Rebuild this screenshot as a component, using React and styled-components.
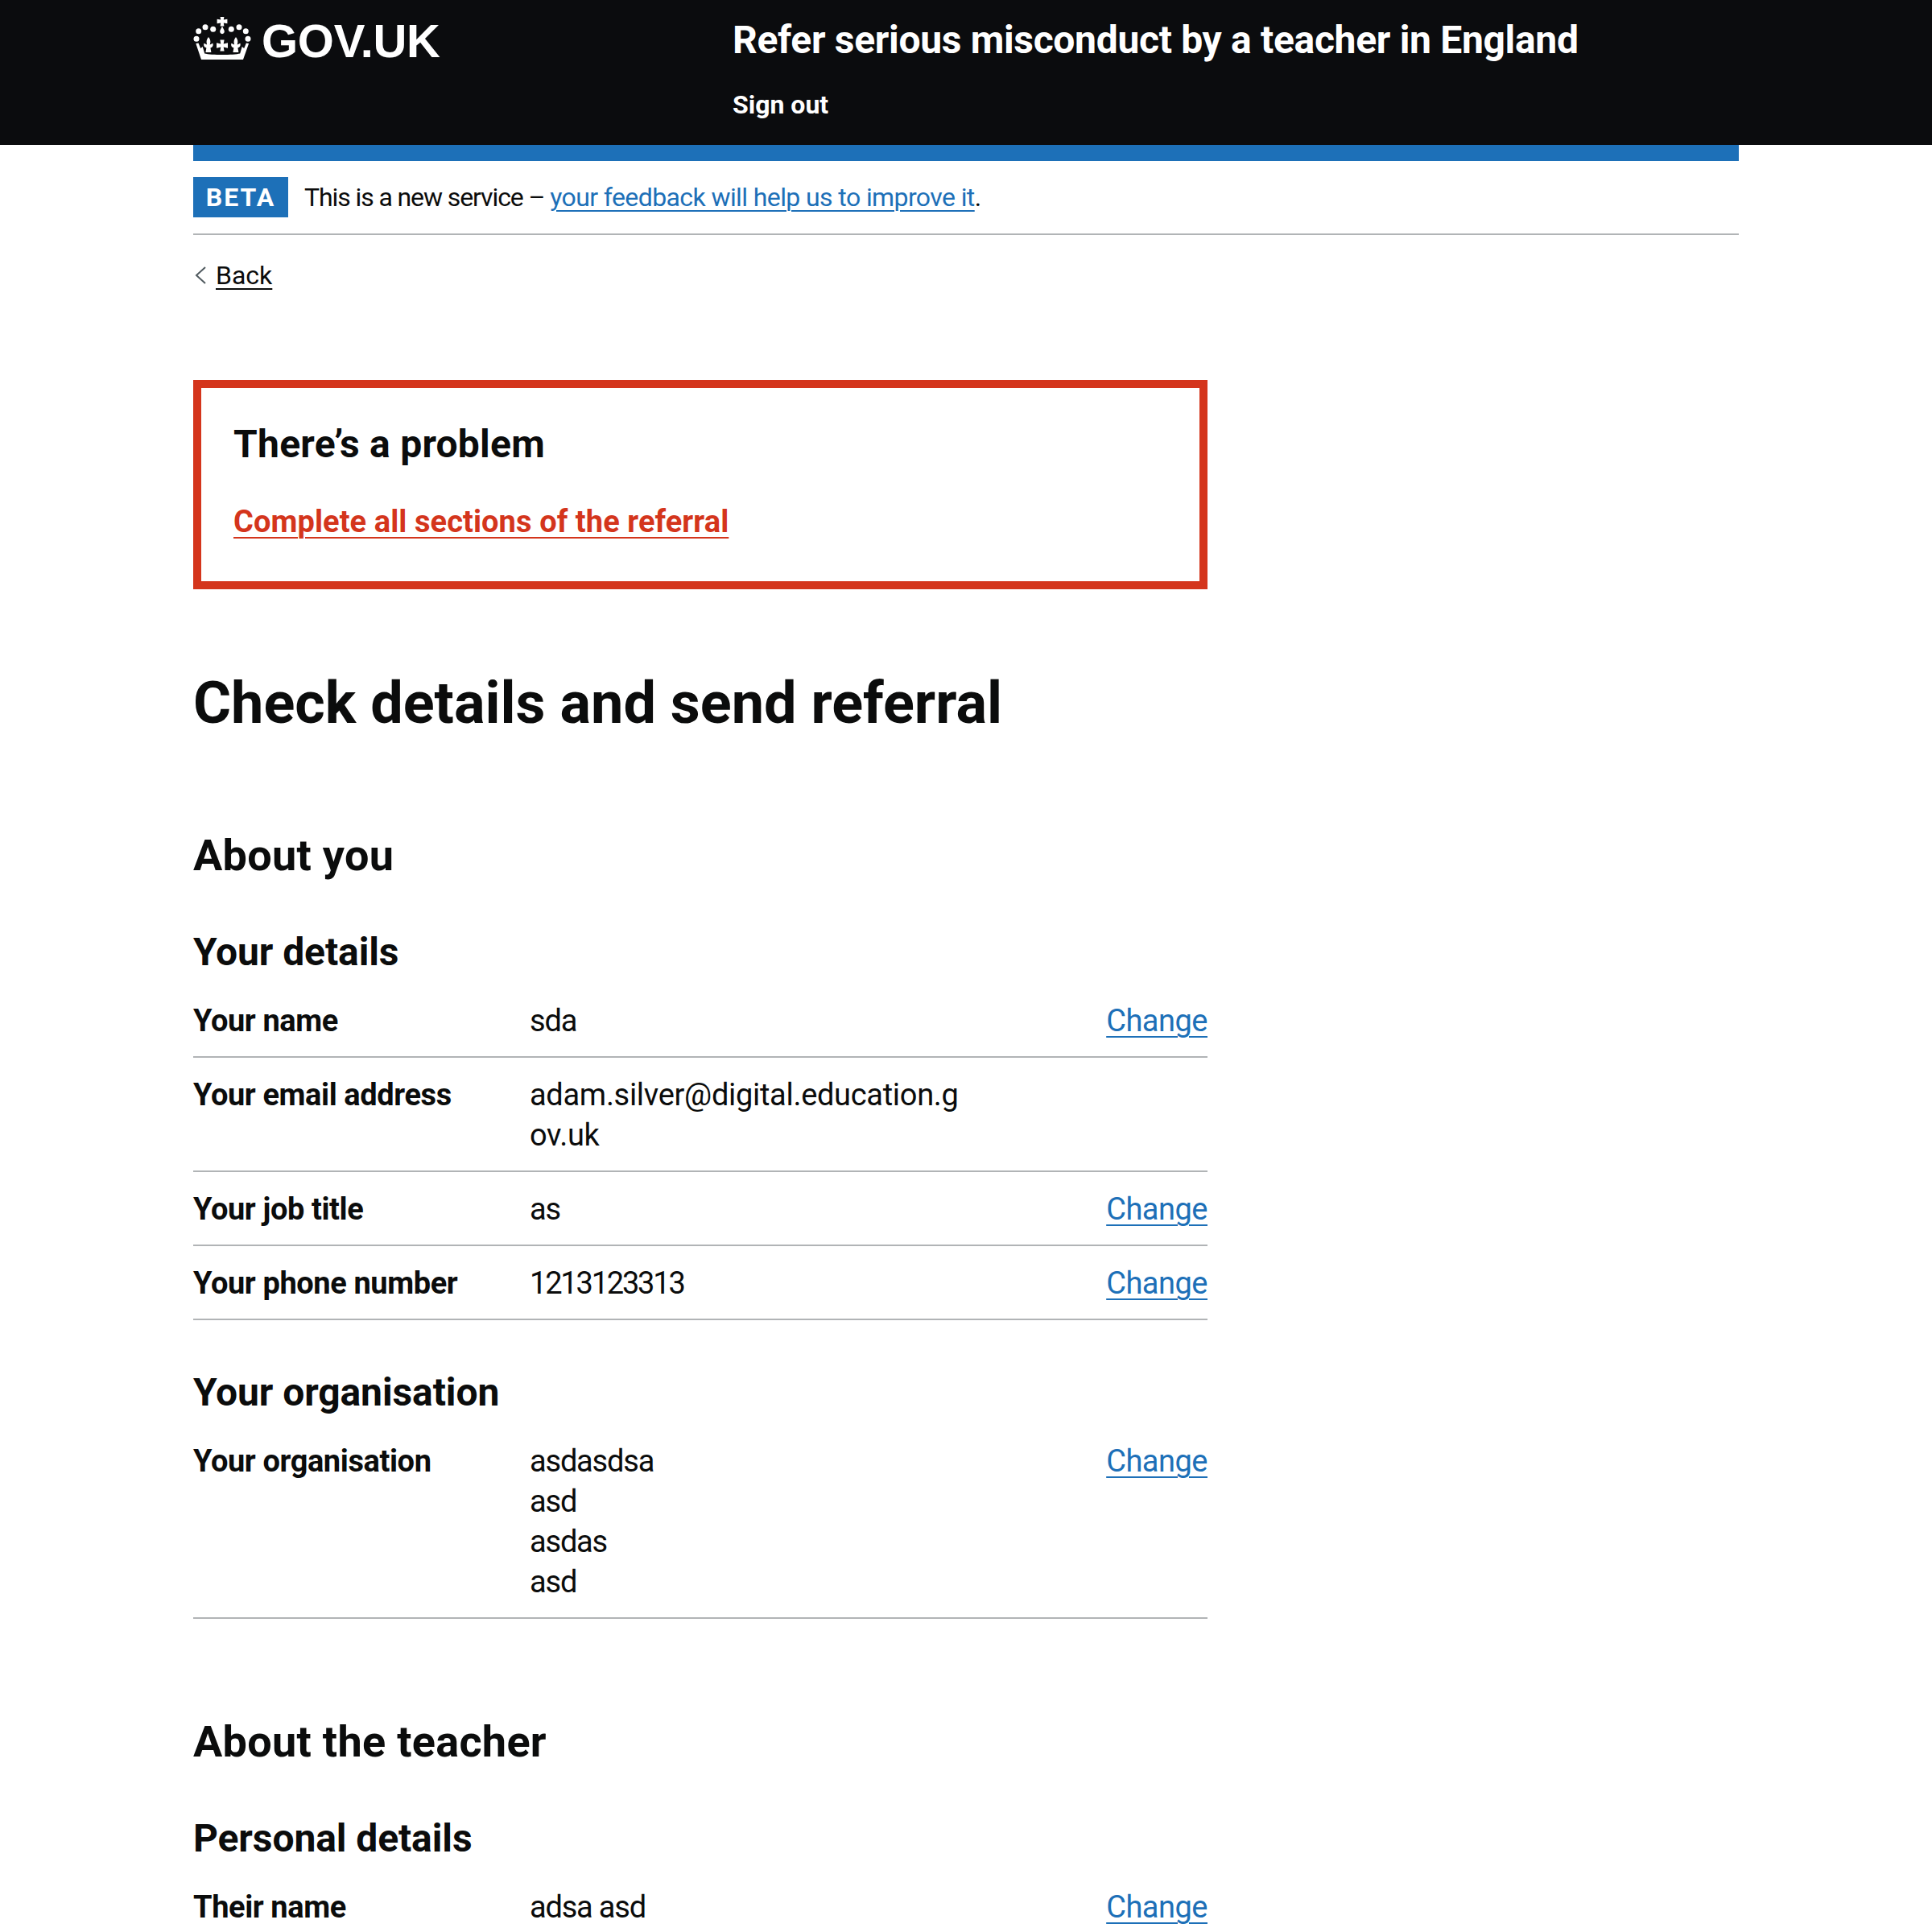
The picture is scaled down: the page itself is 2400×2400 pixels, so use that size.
import React from 'react';
import styled, { createGlobalStyle } from 'styled-components';

const FONT = 'Roboto, "Noto Sans", Arial, sans-serif';

const GlobalStyle = createGlobalStyle`
  html, body { margin: 0; padding: 0; background: #fff; }
  body { font-family: ${FONT}; color: #0b0c0c; font-size: 38px; line-height: 50px; height: 2400px; overflow: hidden; }
  * { box-sizing: border-box; }
`;

const Header = styled.header`
  background: #0b0c0e;
  height: 180px;
  color: #fff;
`;
const Inner = styled.div`
  width: 1920px;
  margin: 0 auto;
`;
const HeaderRow = styled(Inner)`
  display: flex;
  padding-top: 20px;
`;
const LogoCol = styled.div`
  width: 670px;
  display: flex;
  align-items: flex-start;
  height: 60px;
  gap: 13px;
  padding-top: 1px;
`;
const LogoText = styled.span`
  font-size: 58px;
  line-height: 60px;
  font-weight: 700;
  letter-spacing: -0.3px;
  font-family: "Liberation Sans", Arial, sans-serif;
`;
const ServiceCol = styled.div`
  flex: 1;
`;
const ServiceName = styled.div`
  font-size: 48px;
  line-height: 60px;
  font-weight: 700;
  letter-spacing: -0.32px;
  white-space: nowrap;
`;
const SignOut = styled.div`
  margin-top: 30px;
  font-size: 32px;
  line-height: 40px;
  font-weight: 700;
`;
const Page = styled(Inner)``;
const BlueBar = styled.div`
  height: 20px;
  background: #1d70b8;
`;
const PhaseBanner = styled.div`
  display: flex;
  align-items: center;
  gap: 20px;
  height: 92px;
  border-bottom: 2px solid #b1b4b6;
  font-size: 32px;
`;
const PhaseText = styled.span`
  letter-spacing: -1.1px;
`;
const Tag = styled.strong`
  background: #1d70b8;
  color: #fff;
  width: 118px;
  height: 50px;
  display: flex;
  align-items: center;
  justify-content: center;
  font-size: 32px;
  letter-spacing: 2px;
`;
const Link = styled.a`
  color: #1d70b8;
  text-decoration: underline;
  text-decoration-thickness: 2px;
  text-underline-offset: 0.15em;
`;
const PhaseLink = styled(Link)`
  letter-spacing: -0.6px;
`;
const BackRow = styled.div`
  margin-top: 30px;
  font-size: 32px;
  line-height: 40px;
  display: flex;
  align-items: center;
  gap: 12px;
  padding-left: 2px;
`;
const BackLink = styled(Link)`
  color: #0b0c0c;
`;
const Content = styled.main`
  width: 1260px;
  padding-top: 110px;
`;
const ErrorBox = styled.div`
  border: 10px solid #d4351c;
  height: 260px;
  padding: 40px;
`;
const ErrorTitle = styled.h2`
  margin: 0 0 41px;
  font-size: 48px;
  line-height: 60px;
  font-weight: 700;
  letter-spacing: 0.25px;
`;
const ErrorLink = styled(Link)`
  color: #d4351c;
  font-weight: 700;
  letter-spacing: 0.08px;
`;
const PageTitle = styled.h1`
  margin: 106px 0 0;
  font-size: 72px;
  line-height: 72px;
  font-weight: 700;
`;
const SectionTitle = styled.h2`
  margin: 118px 0 0;
  font-size: 54px;
  line-height: 70px;
  font-weight: 700;
  letter-spacing: 0.3px;
`;
const Row = styled.div`
  display: grid;
  grid-template-columns: 418px 545px 297px;
  padding: 21px 0 19px;
  border-bottom: 2px solid #b1b4b6;
`;
const SubTitle = styled.h3`
  margin: 55px 0 9px;
  font-size: 48px;
  line-height: 60px;
  font-weight: 700;
  letter-spacing: -0.1px;
  ${Row} + & {
    margin-top: 60px;
  }
`;
const Key = styled.div`
  font-weight: 700;
  letter-spacing: -0.4px;
`;
const Value = styled.div`
  overflow-wrap: anywhere;
  letter-spacing: ${(p) => p.$tracking}px;
`;
const Action = styled.div`
  text-align: right;
  letter-spacing: -0.5px;
`;

const Fleur = ({ x }) => (
  <path transform={`translate(${x} 0)`} d="M0 25c2.4 3 3 5.6 1.7 9.4l3.7-1.6c.8 2.6-.3 5.2-3 5.6l1 5.6h-7l1-5.6c-2.7-.4-3.8-3-3-5.6l3.7 1.6C-3 30.6-2.4 28 0 25z" />
);

const Crown = () => (
  <svg width="72" height="53" viewBox="0 0 72 53" fill="#fff">
    <path d="M33.6 0h4.8l-.6 3.4 4.6-.7v5.6l-4.6-.7.6 3.9h-4.8l.6-3.9-4.6.7V2.7l4.6.7z" />
    <path d="M36 11.5c1.2 3 2.8 4.6 2.8 6.6 0 1.8-1.2 3.1-2.8 3.1s-2.8-1.3-2.8-3.1c0-2 1.6-3.6 2.8-6.6z" />
    <circle cx="6.7" cy="17.7" r="3.5" /><circle cx="15" cy="12.7" r="3.5" /><circle cx="24.7" cy="15.3" r="3.5" />
    <circle cx="47.3" cy="15.3" r="3.5" /><circle cx="57" cy="12.7" r="3.5" /><circle cx="65.3" cy="17.7" r="3.5" />
    <circle cx="4" cy="27.3" r="3.5" /><circle cx="68" cy="27.3" r="3.5" />
    <path d="M33.4 28.5h5.2l-.9 4.9 5.3-1.1v6.4l-5.3-1.1.9 5h-5.2l.9-5-5.3 1.1v-6.4l5.3 1.1z" />
    <Fleur x={19} />
    <Fleur x={53} />
    <path d="M3.3 33l3.2-.5 2.7 6.5 2.5-2 2.5 8.5c8 2 36 2 44 0l2.5-8.5 2.5 2 2.7-6.5 3.2.5L62 53H10z" />
  </svg>
);

const Chevron = () => (
  <svg width="14" height="22" viewBox="0 0 14 22" fill="none" stroke="#505a5f" strokeWidth="2">
    <path d="M13 1 2 11l11 10" />
  </svg>
);

const Summary = ({ label, children, change = true, tracking = -1.2 }) => (
  <Row>
    <Key>{label}</Key>
    <Value $tracking={tracking}>{children}</Value>
    <Action>{change && <Link href="#">Change</Link>}</Action>
  </Row>
);

export default function App() {
  return (
    <>
      <GlobalStyle />
      <Header>
        <HeaderRow>
          <LogoCol>
            <Crown />
            <LogoText>GOV.UK</LogoText>
          </LogoCol>
          <ServiceCol>
            <ServiceName>Refer serious misconduct by a teacher in England</ServiceName>
            <SignOut>Sign out</SignOut>
          </ServiceCol>
        </HeaderRow>
      </Header>
      <Page>
        <BlueBar />
        <PhaseBanner>
          <Tag>BETA</Tag>
          <PhaseText>This is a new service – <PhaseLink href="#">your feedback will help us to improve it</PhaseLink>.</PhaseText>
        </PhaseBanner>
        <BackRow><Chevron /><BackLink href="#">Back</BackLink></BackRow>
        <Content>
          <ErrorBox>
            <ErrorTitle>There’s a problem</ErrorTitle>
            <ErrorLink href="#">Complete all sections of the referral</ErrorLink>
          </ErrorBox>
          <PageTitle>Check details and send referral</PageTitle>
          <SectionTitle>About you</SectionTitle>
          <SubTitle>Your details</SubTitle>
          <Summary label="Your name">sda</Summary>
          <Summary label="Your email address" change={false} tracking={-0.3}>adam.silver@digital.education.gov.uk</Summary>
          <Summary label="Your job title">as</Summary>
          <Summary label="Your phone number" tracking={-2.2}>1213123313</Summary>
          <SubTitle>Your organisation</SubTitle>
          <Summary label="Your organisation">asdasdsa<br />asd<br />asdas<br />asd</Summary>
          <SectionTitle>About the teacher</SectionTitle>
          <SubTitle>Personal details</SubTitle>
          <Summary label="Their name">adsa asd</Summary>
        </Content>
      </Page>
    </>
  );
}
